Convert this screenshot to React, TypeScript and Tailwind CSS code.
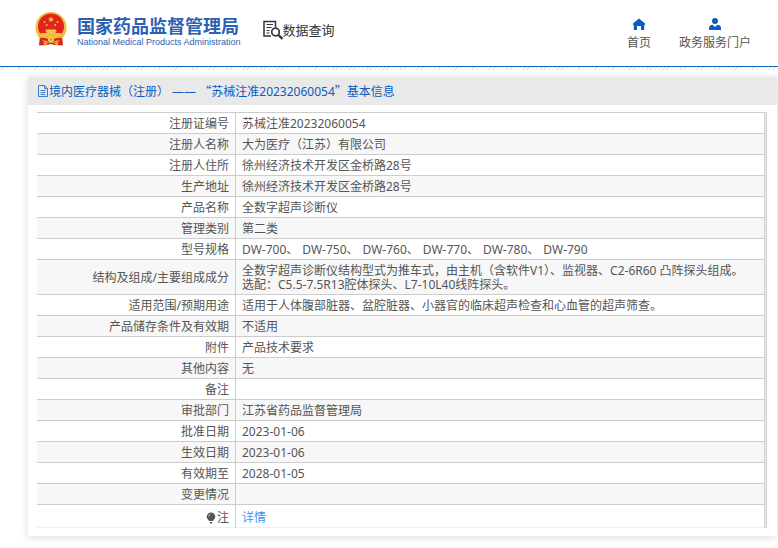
import type { ReactNode } from "react";

type Row = {
  label: ReactNode;
  value: ReactNode;
};

const MODELS = ["DW-700、", "DW-750、", "DW-760、", "DW-770、", "DW-780、", "DW-790"];

const ROWS: Row[] = [
  { label: "注册证编号", value: "苏械注准20232060054" },
  { label: "注册人名称", value: "大为医疗（江苏）有限公司" },
  { label: "注册人住所", value: "徐州经济技术开发区金桥路28号" },
  { label: "生产地址", value: "徐州经济技术开发区金桥路28号" },
  { label: "产品名称", value: "全数字超声诊断仪" },
  { label: "管理类别", value: "第二类" },
  {
    label: "型号规格",
    value: (
      <ul className="flex flex-wrap gap-x-1">
        {MODELS.map((m) => (
          <li key={m}>{m}</li>
        ))}
      </ul>
    ),
  },
  {
    label: "结构及组成/主要组成成分",
    value: (
      <>
        <p>全数字超声诊断仪结构型式为推车式，由主机（含软件V1）、监视器、C2-6R60 凸阵探头组成。</p>
        <p>选配：C5.5-7.5R13腔体探头、L7-10L40线阵探头。</p>
      </>
    ),
  },
  {
    label: "适用范围/预期用途",
    value: "适用于人体腹部脏器、盆腔脏器、小器官的临床超声检查和心血管的超声筛查。",
  },
  { label: "产品储存条件及有效期", value: "不适用" },
  { label: "附件", value: "产品技术要求" },
  { label: "其他内容", value: "无" },
  { label: "备注", value: "" },
  { label: "审批部门", value: "江苏省药品监督管理局" },
  { label: "批准日期", value: "2023-01-06" },
  { label: "生效日期", value: "2023-01-06" },
  { label: "有效期至", value: "2028-01-05" },
  { label: "变更情况", value: "" },
];

function Emblem() {
  return (
    <svg viewBox="0 0 32 34" className="h-[34px] w-8 shrink-0" aria-hidden="true">
      <path d="M5 23L4 33.500l8-.5 4-1 4 1 8 .5L27 23z" fill="#d9251c" />
      <circle cx="16" cy="15.500" r="15.500" fill="#f0bd3c" />
      <circle cx="16" cy="14.500" r="13" fill="#e0261c" />
      <path d="M16 4.500l.8 2h2.200l-1.700 1.400.6 2.200-1.900-1.300-1.900 1.300.6-2.200L13 6.500h2.200z" fill="#f7c64a" />
      <g fill="#f7c64a">
        <circle cx="9.500" cy="10" r=".9" />
        <circle cx="11.800" cy="13" r=".9" />
        <circle cx="20.200" cy="13" r=".9" />
        <circle cx="22.500" cy="10" r=".9" />
        <path d="M11.500 17.500h9l1.500 2h-1.500V21h5v3.500h-19V21h5v-1.500H10z" />
      </g>
      <path d="M2 21.500h28l-4 6H6z" fill="#f0bd3c" />
      <path d="M5 26c4-.5 8 .5 11 2.500 3-2 7-3 11-2.500l-1 2.500c-3-.5-6 .5-8 2h-4c-2-1.500-5-2.500-8-2z" fill="#d9251c" />
      <circle cx="16" cy="27.500" r="3" fill="#f5ce50" />
      <circle cx="16" cy="27.500" r="1.200" fill="#d99a2a" />
      <path d="M8 30l5 1-3 2.500zM24 30l-5 1 3 2.500z" fill="#f0bd3c" />
    </svg>
  );
}

function QueryIcon() {
  return (
    <svg viewBox="0 0 20 20" className="h-5 w-5 shrink-0" fill="none" stroke="#35323f" aria-hidden="true">
      <path d="M12.500 7V1.500H1V16h7" strokeWidth="1.500" />
      <path d="M3.500 4.500h6.500M3.500 7.500h5M3.500 10.500h3M3.500 13h3" strokeWidth="1.200" />
      <circle cx="12.500" cy="12" r="3.800" strokeWidth="1.700" />
      <path d="M15.500 15l4 4" strokeWidth="2.400" />
    </svg>
  );
}

function HomeIcon() {
  return (
    <svg viewBox="0 0 12 12" className="h-3 w-3" fill="#0a5cbf" aria-hidden="true">
      <path d="M6 .5L0 5.500V7h.8v5H4V8h4v4h3.200V7h.8V5.500z" />
    </svg>
  );
}

function UserIcon() {
  return (
    <svg viewBox="0 0 12 12" className="h-3 w-3" fill="#0a5cbf" aria-hidden="true">
      <circle cx="6" cy="3" r="3" />
      <path d="M0 12V10c0-2 1.500-3 3.500-3.300L6 9l2.500-2.300C10.500 7 12 8 12 10v2z" />
    </svg>
  );
}

function DocIcon() {
  return (
    <svg viewBox="0 0 12 12" className="h-3 w-3 shrink-0" fill="none" stroke="#3f7ccb" aria-hidden="true">
      <path d="M1.500.5h6l3 3v8h-9z" />
      <path d="M7.500.5v3h3M3.500 5.500h5M3.500 7.500h5M3.500 9.500h5" />
    </svg>
  );
}

function BulbIcon() {
  return (
    <svg viewBox="0 0 10 12" className="h-3 w-2.5" aria-hidden="true">
      <path d="M5 .5a4.300 4.300 0 0 1 4.300 4.300C9.300 7 7.500 7.500 7 9H3C2.500 7.500.7 7 .7 4.800A4.300 4.300 0 0 1 5 .5z" fill="#555" />
      <path d="M3.500 10h3l-.7 1.500H4.200z" fill="#555" />
      <path d="M2.500 4.500A2.500 2.500 0 0 1 4.500 2.300" stroke="#ccc" strokeWidth=".8" fill="none" />
    </svg>
  );
}

function Header() {
  return (
    <header className="flex h-[67px] items-start border-b border-[#0a64bf]">
      <a href="#" className="mt-3 ml-[35px] flex shrink-0 items-start gap-2.5 text-[#2d5fb5]">
        <Emblem />
        <span className="flex flex-col">
          <span className="mt-1 text-lg leading-5 font-bold">国家药品监督管理局</span>
          <span className="font-['Liberation_Sans',sans-serif] text-[9px] leading-3">
            National Medical Products Administration
          </span>
        </span>
      </a>
      <div className="mt-5 ml-[22px] flex shrink-0 items-center text-[13px] leading-5 text-[#333]">
        <QueryIcon />
        <h1>数据查询</h1>
      </div>
      <nav className="mt-[18px] mr-[27px] ml-auto flex gap-7">
        <a href="#" className="flex flex-col items-center gap-[5px]">
          <HomeIcon />
          首页
        </a>
        <a href="#" className="flex flex-col items-center gap-[5px]">
          <UserIcon />
          政务服务门户
        </a>
      </nav>
    </header>
  );
}

export default function App() {
  return (
    <div className="bg-white pb-3 font-['Noto_Sans','Noto_Sans_CJK_SC',sans-serif] text-xs leading-4 text-[#555]">
      <Header />
      <div className="h-[3px] bg-[repeating-linear-gradient(135deg,#fff_0px,#fff_2px,#e4e4e4_2px,#e4e4e4_3px)]" />
      <main className="mt-[7px] mr-px ml-7 bg-white shadow-[0_1px_8px_rgba(0,0,0,0.15)]">
        <h2 className="flex h-7 items-center bg-[#e9e9e9] px-[9px] text-[#0a5cbf]">
          <DocIcon />
          <span className="whitespace-pre">
            境内医疗器械（注册） —— <span className="font-['Noto_Sans_CJK_SC',sans-serif]">“</span>
            苏械注准20232060054<span className="font-['Noto_Sans_CJK_SC',sans-serif]">”</span>基本信息
          </span>
        </h2>
        <div className="px-[9px] pt-[7px] pb-2">
          <div className="mr-px border-r border-[#ccc] bg-[#f0f0f0] pr-px">
            <table className="w-full border-separate border-spacing-0 border-t border-r border-[#ccc] bg-white leading-[14px]">
              <tbody>
                {ROWS.map((row, i) => (
                  <tr key={i} className="even:bg-[#f7f7f7]">
                    <th
                      scope="row"
                      className="w-[199px] border-r border-b border-[#ccc] pt-1 pr-1.5 pb-0.5 text-right font-normal"
                    >
                      {row.label}
                    </th>
                    <td className="h-[21px] border-b border-[#ccc] pt-1 pb-0.5 pl-1.5">{row.value}</td>
                  </tr>
                ))}
                <tr>
                  <th
                    scope="row"
                    className="h-[23px] border-r border-b border-r-[#ccc] border-b-[#eee] pt-1 pr-1.5 text-right font-normal"
                  >
                    <span className="flex items-center justify-end gap-px">
                      <BulbIcon />注
                    </span>
                  </th>
                  <td className="border-b border-[#eee] pt-1 pl-1.5">
                    <a href="#" className="text-[#3c95f5]">
                      详情
                    </a>
                  </td>
                </tr>
              </tbody>
            </table>
          </div>
        </div>
      </main>
    </div>
  );
}
